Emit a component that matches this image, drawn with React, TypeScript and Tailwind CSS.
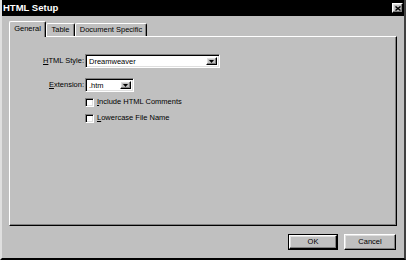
import React from 'react';

const raised =
  'border border-t-white border-l-white border-r-black border-b-black shadow-[inset_-1px_-1px_0_#808080,inset_1px_1px_0_#dfdfdf]';
const sunken =
  'border border-t-[#808080] border-l-[#808080] border-r-white border-b-white shadow-[inset_1px_1px_0_#000,inset_-1px_-1px_0_#dfdfdf]';

const Combo = ({ value, className }: { value: string; className: string }) => (
  <div className={`flex h-[14px] bg-white p-[2px] ${sunken} ${className}`}>
    <span className="flex-1 pl-px text-[7.5px] leading-[10px] text-black">{value}</span>
    <span className={`flex w-[11px] items-center justify-center bg-[#c0c0c0] ${raised}`}>
      <svg width="5" height="3" viewBox="0 0 5 3">
        <path d="M0 0h5L2.5 3z" fill="#000" />
      </svg>
    </span>
  </div>
);

const Check = ({ first, rest }: { first: string; rest: string }) => (
  <div className="flex h-[16px] items-center gap-[3px]">
    <span className={`h-[9px] w-[9px] bg-white ${sunken}`} />
    <span className="text-[7.5px] leading-none">
      <span className="underline">{first}</span>
      {rest}
    </span>
  </div>
);

const Tab = ({ label, width, active }: { label: string; width: string; active?: boolean }) =>
  active ? (
    <div
      className={`relative z-10 flex h-[16px] ${width} items-start justify-center rounded-t-[2px] border-l border-t border-r border-l-white border-t-white border-r-black bg-[#c0c0c0] pt-[3px] text-[7.5px] leading-none shadow-[inset_-1px_0_0_#808080]`}
    >
      {label}
    </div>
  ) : (
    <div
      className={`mt-[2px] flex h-[13px] ${width} items-start justify-center rounded-t-[2px] border-l border-t border-r border-l-white border-t-white border-r-black pt-[2px] text-[7.5px] leading-none shadow-[inset_-1px_0_0_#808080]`}
    >
      {label}
    </div>
  );

export default function App() {
  return (
    <div
      className="flex h-[260px] w-[406px] flex-col border-b-2 border-l-2 border-r-2 border-b-black border-l-[#dfdfdf] border-r-[#404040] bg-[#c0c0c0] text-black"
      style={{ fontFamily: '"Liberation Sans", Arial, sans-serif' }}
    >
      {/* title bar */}
      <div className="flex h-[16px] items-center justify-between bg-black pl-[1px] pr-[1px]">
        <span className="text-[9.5px] font-bold leading-none text-white">HTML Setup</span>
        <span className={`flex h-[10px] w-[11px] items-center justify-center bg-[#c0c0c0] ${raised}`}>
          <svg width="6" height="5" viewBox="0 0 6 5">
            <path d="M0.5 0.5L5.5 4.5M5.5 0.5L0.5 4.5" stroke="#000" strokeWidth="1.4" />
          </svg>
        </span>
      </div>

      {/* tabs */}
      <div className="mt-[5px] ml-[7px] -mb-px flex">
        <Tab label="General" width="w-[37px]" active />
        <Tab label="Table" width="w-[29px]" />
        <Tab label="Document Specific" width="w-[72px]" />
      </div>

      {/* panel */}
      <div className="ml-[7px] flex h-[190px] w-[388px] flex-col border border-t-white border-l-white border-r-black border-b-black pt-[17px] shadow-[inset_-1px_-1px_0_#808080]">
        <div className="grid grid-cols-[75px_auto] items-center gap-y-[10px]">
          <span className="pr-px text-right text-[7.5px] leading-none">
            <span className="underline">H</span>TML Style:
          </span>
          <Combo value="Dreamweaver" className="w-[135px]" />
          <span className="pr-px text-right text-[7.5px] leading-none">
            <span className="underline">E</span>xtension:
          </span>
          <Combo value=".htm" className="w-[49px]" />
        </div>
        <div className="ml-[75px] mt-[2px] flex flex-col">
          <Check first="I" rest="nclude HTML Comments" />
          <Check first="L" rest="owercase File Name" />
        </div>
      </div>

      {/* buttons */}
      <div className="mr-[8px] mt-[8px] flex justify-end gap-[6px]">
        <div className="h-[16px] w-[50px] border border-black">
          <div className={`flex h-full w-full items-center justify-center bg-[#c0c0c0] text-[7.5px] ${raised}`}>
            OK
          </div>
        </div>
        <div className={`flex h-[16px] w-[52px] items-center justify-center bg-[#c0c0c0] text-[7.5px] ${raised}`}>
          Cancel
        </div>
      </div>
    </div>
  );
}
